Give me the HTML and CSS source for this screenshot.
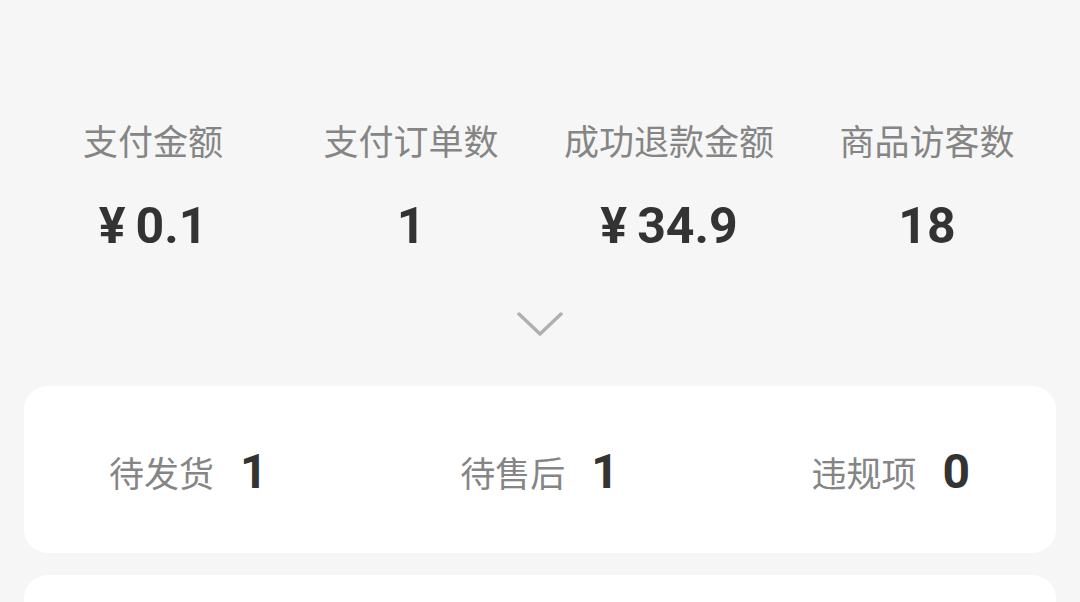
FILE: index.html
```html
<!DOCTYPE html>
<html lang="zh-CN">
<head>
  <meta charset="UTF-8">
  <meta name="viewport" content="width=device-width, initial-scale=1.0">
  <title>店铺数据</title>
  <link rel="stylesheet" href="styles.css">
</head>
<body>

  <!-- 今日数据 -->
  <div class="summary">
    <div class="stat">
      <div class="stat-label">支付金额</div>
      <div class="stat-value"><span class="yen">¥</span>0.1</div>
    </div>
    <div class="stat">
      <div class="stat-label">支付订单数</div>
      <div class="stat-value">1</div>
    </div>
    <div class="stat">
      <div class="stat-label">成功退款金额</div>
      <div class="stat-value"><span class="yen">¥</span>34.9</div>
    </div>
    <div class="stat">
      <div class="stat-label">商品访客数</div>
      <div class="stat-value">18</div>
    </div>
  </div>

  <div class="expand">
    <svg width="46" height="24" viewBox="0 0 46 24">
      <polyline points="2,2 23,22 44,2" fill="none" stroke="#b0b0b0" stroke-width="3.5" stroke-linecap="round" stroke-linejoin="round"/>
    </svg>
  </div>

  <!-- 待办 -->
  <div class="card todo">
    <div class="todo-item">
      <span class="todo-label">待发货</span>
      <span class="todo-num">1</span>
    </div>
    <div class="todo-item">
      <span class="todo-label">待售后</span>
      <span class="todo-num">1</span>
    </div>
    <div class="todo-item">
      <span class="todo-label">违规项</span>
      <span class="todo-num">0</span>
    </div>
  </div>

  <div class="card next"></div>

</body>
</html>
```

FILE: styles.css
```css
body {
  margin: 0;
  padding: 0 24px;
  background-color: #f6f6f6;
  font-family: "Noto Sans CJK SC", "Noto Sans", sans-serif;
  overflow: hidden;
}

/* 今日数据 */
.summary {
  display: grid;
  grid-template-columns: repeat(4, 1fr);
  padding-top: 116px;
}

.stat {
  text-align: center;
}

.stat-label {
  font-size: 35px;
  line-height: 48px;
  color: #858585;
}

.stat-value {
  margin-top: 32px;
  font-family: Roboto, "Liberation Sans", sans-serif;
  font-size: 50px;
  font-weight: 700;
  line-height: 60px;
  color: #333;
}

.yen {
  margin-right: 10px;
}

.expand {
  display: flex;
  justify-content: center;
  margin: 56px 0 50px;
  height: 24px;
}

/* Karten */
.card {
  background-color: #fff;
  border-radius: 24px;
}

.todo {
  height: 167px;
  padding: 0 86px 0 85px;
  display: flex;
  align-items: center;
  justify-content: space-between;
}

.todo-item {
  display: flex;
  align-items: center;
  padding-top: 3px;
}

.todo-label {
  font-size: 35px;
  color: #858585;
}

.todo-num {
  margin-left: 26px;
  font-family: Roboto, "Liberation Sans", sans-serif;
  font-size: 48px;
  font-weight: 700;
  color: #333;
}

.next {
  margin-top: 22px;
  height: 200px;
}
```
